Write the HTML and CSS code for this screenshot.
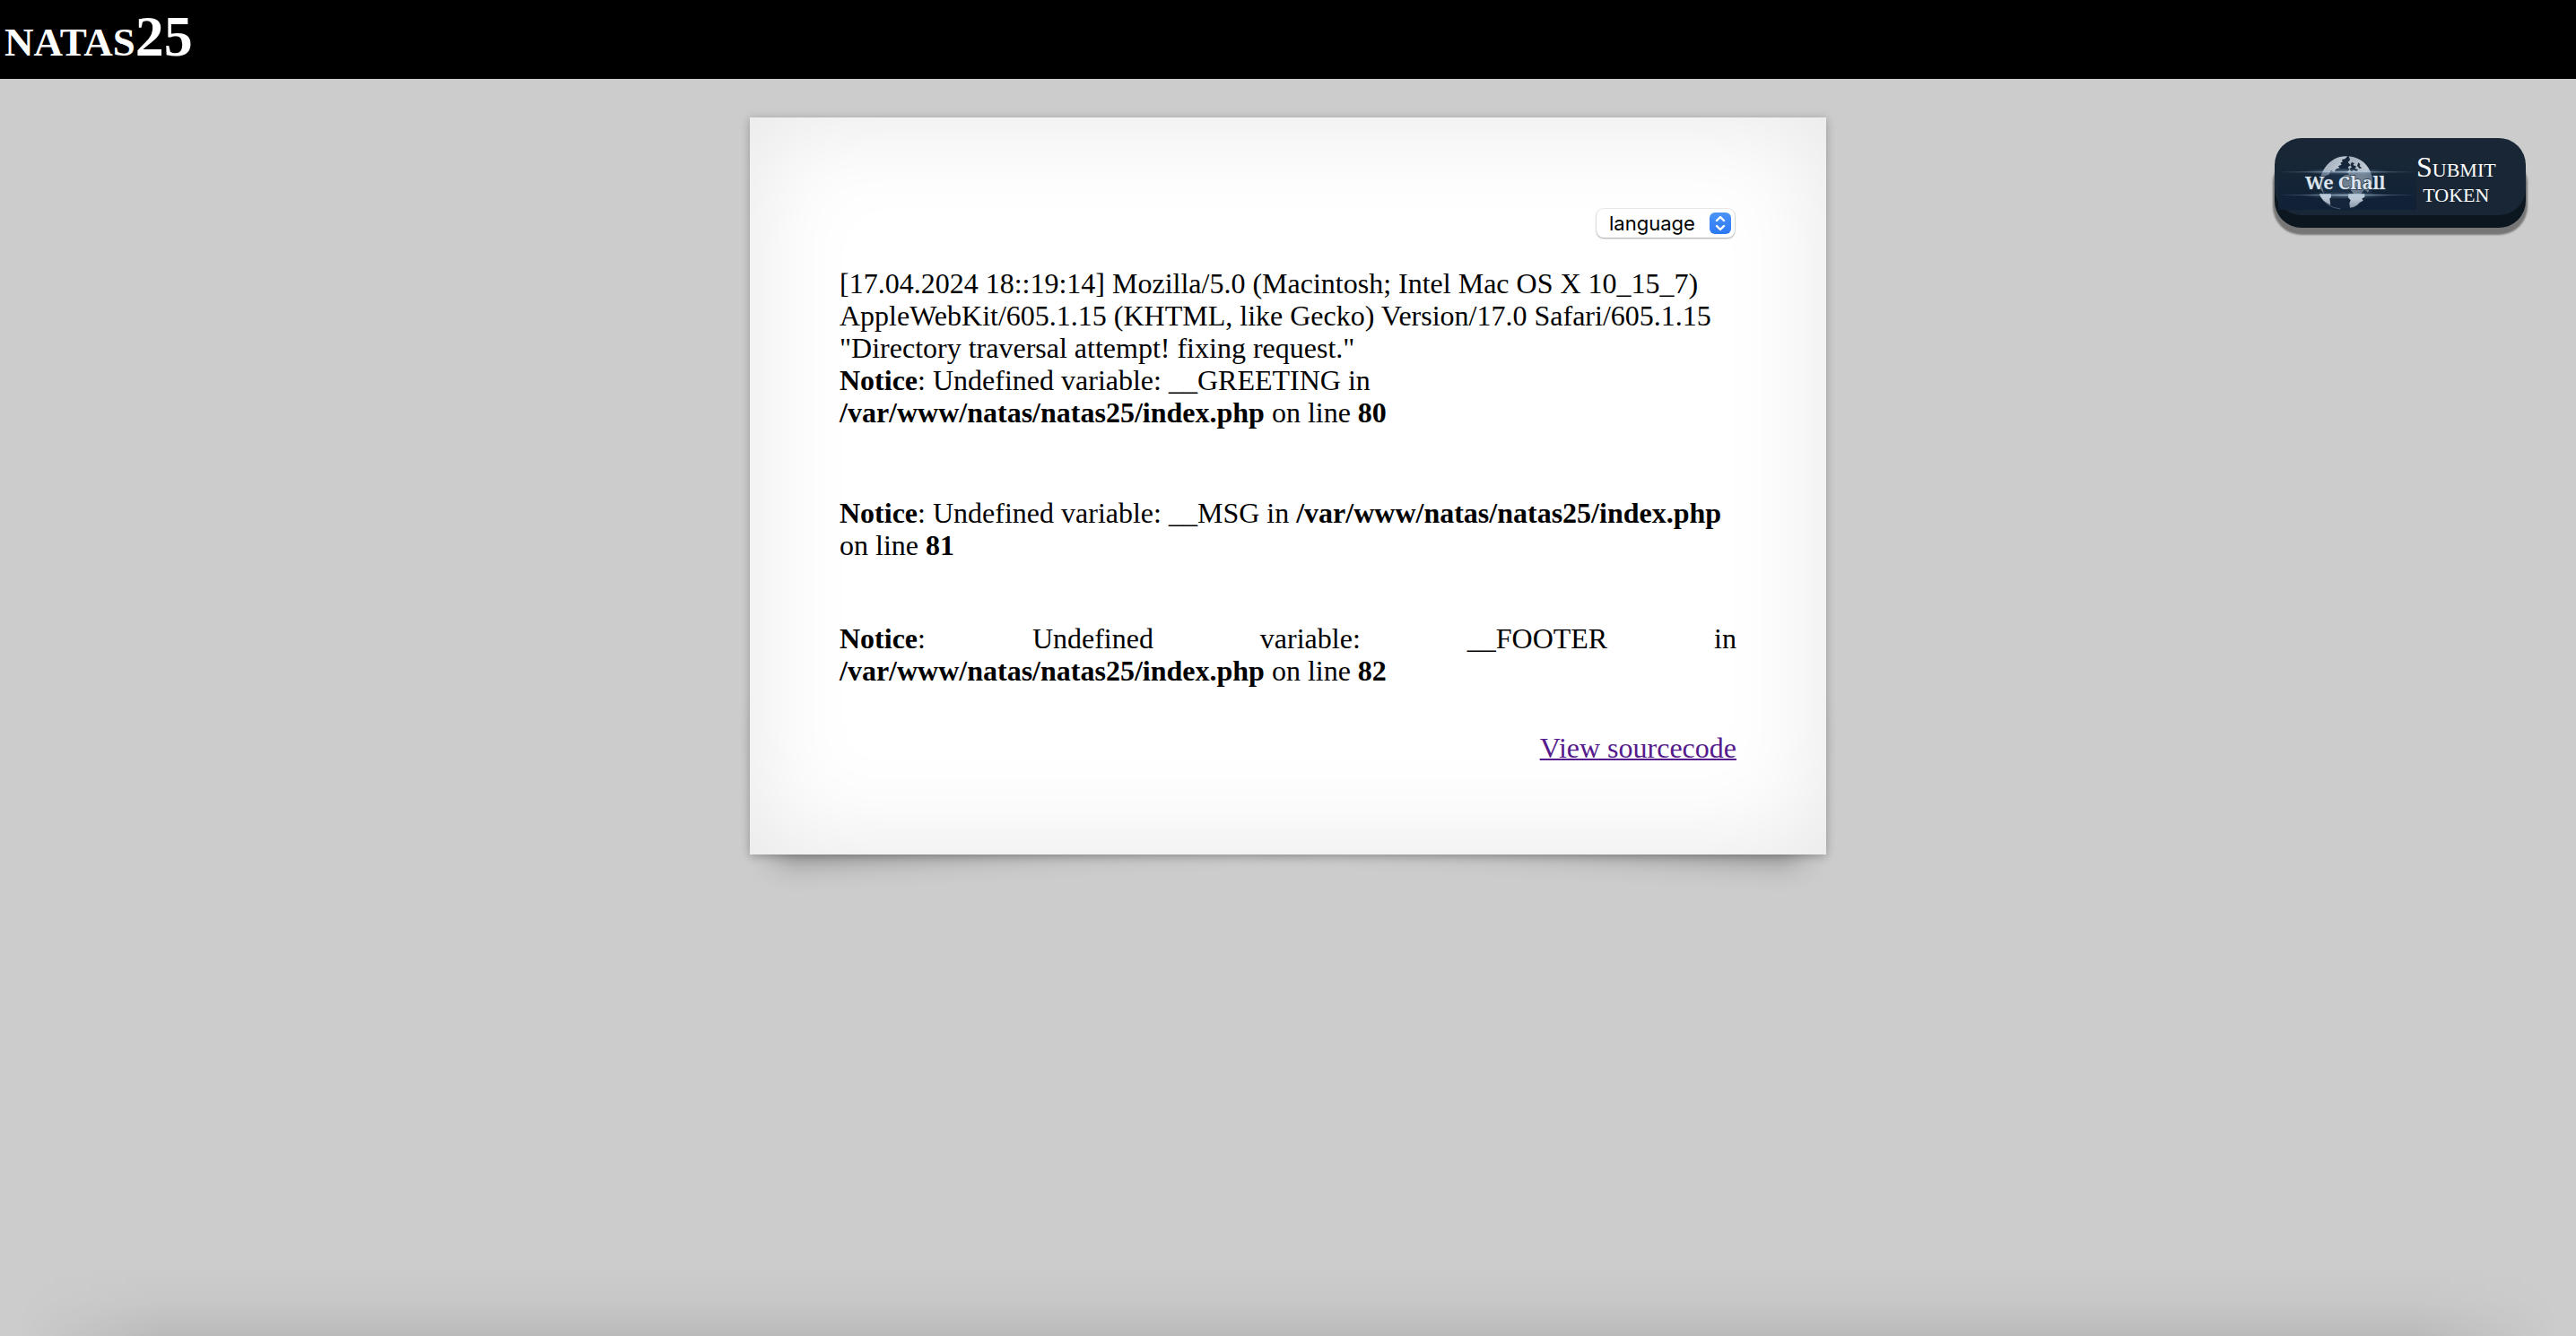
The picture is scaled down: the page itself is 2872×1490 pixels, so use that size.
FILE: index.html
```html
<!DOCTYPE html>
<html lang="en">
<head>
<meta charset="utf-8">
<title>natas25</title>
<link rel="stylesheet" href="styles.css">
</head>
<body>
<h1 class="site-title">natas25</h1>
<main class="main">
  <section class="paper">
    <form class="language-form">
      <select class="language" aria-label="language">
        <option>language</option>
        <option>en</option>
        <option>de</option>
      </select>
      <svg class="language-arrows" viewBox="0 0 24 24" aria-hidden="true">
        <path d="M8 9l4-4 4 4M8 15l4 4 4-4" fill="none" stroke="#fff" stroke-width="2.4" stroke-linecap="round" stroke-linejoin="round"/>
      </svg>
    </form>
    <div class="log">[17.04.2024 18::19:14] Mozilla/5.0 (Macintosh; Intel Mac OS X 10_15_7) AppleWebKit/605.1.15 (KHTML, like Gecko) Version/17.0 Safari/605.1.15 "Directory traversal attempt! fixing request."<br><b>Notice</b>: Undefined variable: __GREETING in <b>/var/www/natas/natas25/index.php</b> on line <b>80</b></div>
    <p class="notice"><b>Notice</b>: Undefined variable: __MSG in <b>/var/www/natas/natas25/index.php</b> on line <b>81</b></p>
    <p class="notice notice-footer"><b>Notice</b>: Undefined variable: __FOOTER in <b>/var/www/natas/natas25/index.php</b> on line <b>82</b></p>
    <div class="source"><a class="source-link" href="#source">View sourcecode</a></div>
  </section>
</main>
<button class="wechall" type="button">
  <svg class="wechall-logo" viewBox="0 0 462 180" aria-hidden="true">
    <defs>
      <linearGradient id="panel" x1="0" y1="0" x2="0" y2="1"><stop offset="0" stop-color="#182836"/><stop offset="1" stop-color="#102036"/></linearGradient>
      <linearGradient id="flare"><stop offset="0" stop-color="#8fb4d0" stop-opacity="0"/><stop offset=".5" stop-color="#b4cbdc" stop-opacity=".9"/><stop offset="1" stop-color="#8fb4d0" stop-opacity="0"/></linearGradient>
      <linearGradient id="globe" x1="0" y1="0" x2="1" y2="1"><stop offset="0" stop-color="#98a4b3"/><stop offset=".6" stop-color="#c3ccd6"/><stop offset="1" stop-color="#8c99aa"/></linearGradient>
      <linearGradient id="south" x1="0" y1="0" x2="0" y2="1"><stop offset="0" stop-color="#d8e2ec"/><stop offset="1" stop-color="#8795a8"/></linearGradient>
      <radialGradient id="glow"><stop offset="0" stop-color="#a9c2d8" stop-opacity=".5"/><stop offset="1" stop-color="#7e9ab5" stop-opacity="0"/></radialGradient>
    </defs>
    <rect width="462" height="180" fill="url(#panel)"/>
    <circle cx="227" cy="89" r="88" fill="#15263a"/>
    <path fill="url(#globe)" d="M140 78C146 48 164 24 188 10C200 4 214 0 232 1L224 9L212 13L216 18L208 23L212 29L200 34L206 40L194 43L187 54L176 48L170 62L158 66L150 82L145 100L154 127L140 108Z"/>
    <path fill="url(#globe)" d="M236 1C276 4 304 31 313 66L315 92L300 122L288 112L276 128L254 128L241 112L222 106L206 92L208 76L222 64L238 62L229 54L238 46L233 37L242 31L233 21L240 13Z"/>
    <path fill="#17283a" d="M246 20l9 5-5 5 12 5-6 6 11 4-4 7-12-5-5 6-8-9 8-7-5-6zM214 42l9-4 4 7-8 6zM194 58l11-3 3 6-10 4zM268 22l6 5-2 7 8 6-8 2-8-9zM228 25l5 3-5 6-6-4z"/>
    <path fill="#223950" opacity=".48" d="M139 54H313V128H139Z"/>
    <path fill="url(#south)" d="M138 127H176L177 137L172 143L175 164C156 155 141 142 138 127ZM235 127H289V138L280 142L284 149L272 156L264 164L252 171L240 173L238 158L242 148L234 139Z"/>
    <path d="M141 132Q158 171 208 177" fill="none" stroke="#91a2b5" stroke-width="2" opacity=".7"/>
    <ellipse cx="227" cy="52" rx="150" ry="12" fill="url(#glow)"/>
    <ellipse cx="227" cy="132" rx="150" ry="12" fill="url(#glow)"/>
    <rect y="52" width="462" height="3" fill="url(#flare)"/>
    <rect y="129" width="462" height="3" fill="url(#flare)"/>
    <text class="wechall-name" x="90" y="111">We Chall</text>
  </svg>
  <span class="wechall-label">Submit token</span>
</button>
<div class="bottom-shade"></div>
</body>
</html>
```
FILE: styles.css
```css
* {
  box-sizing: border-box;
}

body {
  position: relative;
  min-height: 100vh;
  margin: 0;
  background: #ccc;
  color: #000;
  font: 32px/36px "Liberation Serif", "Times New Roman", serif;
}

.site-title {
  margin: 0;
  padding: 5px 5px 11px;
  background: #000;
  color: #fff;
  font-size: 64px;
  line-height: 72px;
  font-variant: small-caps;
}

.main {
  position: relative;
  z-index: 0;
  padding: 43px 24px;
}

.paper {
  position: relative;
  max-width: 1200px;
  margin: 0 auto;
  padding: 100px;
  background: #fff;
  box-shadow: 0 2px 10px rgba(0, 0, 0, .27), inset 0 0 120px rgba(0, 0, 0, .1);
}

/* Lifted corners: two tilted strips that cast their shadow from behind the paper. */
.paper::before,
.paper::after {
  content: "";
  position: absolute;
  z-index: -1;
  bottom: 30px;
  left: 24px;
  width: 50%;
  height: 20%;
  box-shadow: 0 24px 32px rgba(0, 0, 0, .3);
  transform: rotate(-3deg);
}

.paper::after {
  left: auto;
  right: 24px;
  transform: rotate(3deg);
}

.language-form {
  position: relative;
  display: flex;
  justify-content: flex-end;
  padding: 2px 2px 33px;
}

.language {
  width: 154px;
  height: 32px;
  padding: 0 0 0 14px;
  border: 0;
  border-radius: 8px;
  appearance: none;
  background: #fff;
  box-shadow: 0 0 1px 1px rgba(0, 0, 0, .08), 0 1px 2px rgba(0, 0, 0, .3);
  color: #000;
  font: 22px/32px Inter, "Liberation Sans", sans-serif;
}

.language-arrows {
  position: absolute;
  top: 6px;
  right: 6px;
  width: 24px;
  height: 24px;
  border-radius: 6px;
  background: linear-gradient(#4a94f8, #2c78f3);
  pointer-events: none;
}

.notice {
  margin: 76px 0 0;
}

.notice-footer {
  margin-top: 68px;
  text-align: justify;
}

.source {
  margin-top: 50px;
  padding-bottom: 1px;
  text-align: right;
}

.source-link {
  color: #551a8b;
  text-decoration-thickness: 2px;
}

.wechall {
  position: absolute;
  z-index: 1;
  top: 154px;
  right: 56px;
  display: flex;
  align-items: center;
  width: 280px;
  height: 86px;
  padding: 14px 40px 0 4px;
  border: 0;
  border-radius: 30px;
  background: #182635;
  box-shadow: 0 14px 0 #0c161f, 0 20px 2px 2px rgba(0, 0, 0, .42);
  color: #fff;
  font: 32px/28px "Liberation Serif", "Times New Roman", serif;
  font-variant: small-caps;
}

.wechall-logo {
  flex: none;
  width: 154px;
  height: 60px;
}

.wechall-name {
  fill: #dce4ed;
  stroke: #26384a;
  stroke-width: 4px;
  paint-order: stroke;
  font: bold 60px "Noto Serif", "DejaVu Serif", "Liberation Serif", serif;
  font-variant: normal;
}

.wechall-label {
  flex: 1;
  margin-top: -8px;
  text-align: center;
}

.bottom-shade {
  position: absolute;
  bottom: 0;
  left: 0;
  right: 0;
  height: 76px;
  background: linear-gradient(transparent, rgba(0, 0, 0, .02) 48%, rgba(0, 0, 0, .085));
  mask-image: linear-gradient(90deg, transparent 20px, #000 180px, #000 calc(100% - 180px), transparent calc(100% - 20px));
  pointer-events: none;
}
```
